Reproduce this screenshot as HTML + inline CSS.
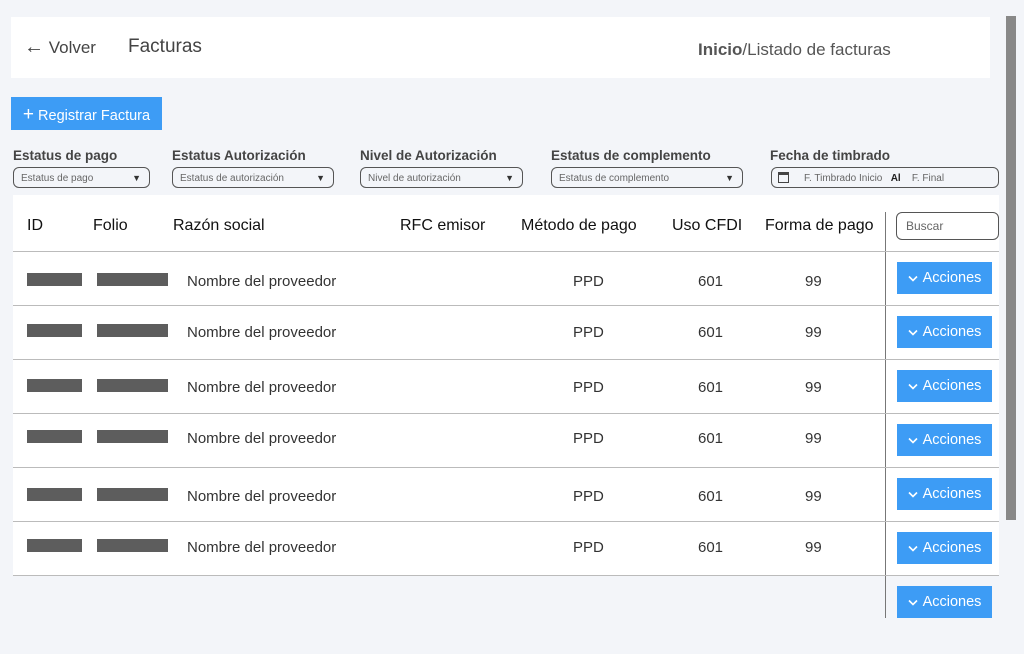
<!DOCTYPE html><html><head><style>
body{margin:0;width:1024px;height:654px;background:#f3f5f9;font-family:"Liberation Sans",sans-serif;position:relative;overflow:hidden;color:#222}
.a{position:absolute}
.hdr{left:11px;top:17px;width:979px;height:61px;background:#fff}
.lbl{font-size:13.5px;font-weight:bold;color:#444;top:148px}
.sel{top:167px;height:21px;border:1px solid #555;border-radius:6px;font-size:10px;color:#666;line-height:21px;padding-left:7px;box-sizing:border-box}
.sel i{position:absolute;right:8px;top:0;font-style:normal;font-size:9px;color:#333}
.th{top:217px;font-size:16px;color:#111}
.line{left:13px;width:986px;height:1px;background:#bbb}
.td{font-size:15px;color:#333}
.bar{height:13px;background:#5d5d5d}
.btn{left:897px;width:95px;height:32px;background:#3d9cf5;color:#fff;font-size:14.5px;line-height:32px;text-align:center}
</style></head><body>
<div class="a hdr"></div>
<div class="a" style="left:24px;top:38px;font-size:17px;color:#444"><span style="font-size:20px;line-height:17px">&#8592;</span> Volver</div>
<div class="a" style="left:128px;top:36px;font-size:19px;color:#444">Facturas</div>
<div class="a" style="left:698px;top:40px;font-size:17px;color:#555"><b style="color:#555">Inicio</b>/Listado de facturas</div>
<div class="a" style="left:11px;top:97px;width:151px;height:33px;background:#3d9cf5;color:#fff;font-size:14.5px;line-height:35px;text-align:center"><span style="font-size:19px">+</span> Registrar Factura</div>
<div class="a lbl" style="left:13px">Estatus de pago</div>
<div class="a lbl" style="left:172px">Estatus Autorización</div>
<div class="a lbl" style="left:360px">Nivel de Autorización</div>
<div class="a lbl" style="left:551px">Estatus de complemento</div>
<div class="a lbl" style="left:770px">Fecha de timbrado</div>
<div class="a sel" style="left:13px;width:137px">Estatus de pago<i>&#9660;</i></div>
<div class="a sel" style="left:172px;width:162px">Estatus de autorización<i>&#9660;</i></div>
<div class="a sel" style="left:360px;width:163px">Nivel de autorización<i>&#9660;</i></div>
<div class="a sel" style="left:551px;width:192px">Estatus de complemento<i>&#9660;</i></div>
<div class="a sel" style="left:771px;width:228px;padding-left:32px">F. Timbrado Inicio &nbsp;&nbsp;<b style="color:#222">Al</b>&nbsp;&nbsp;&nbsp; F. Final<span class="a" style="left:6px;top:4px;width:11px;height:11px;border:1px solid #444;border-top-width:3px;box-sizing:border-box"></span></div>
<div class="a" style="left:13px;top:195px;width:986px;height:380px;background:#fff"></div>
<div class="a th" style="left:27px">ID</div>
<div class="a th" style="left:93px">Folio</div>
<div class="a th" style="left:173px">Razón social</div>
<div class="a th" style="left:400px">RFC emisor</div>
<div class="a th" style="left:521px">Método de pago</div>
<div class="a th" style="left:672px">Uso CFDI</div>
<div class="a th" style="left:765px">Forma de pago</div>
<div class="a" style="left:896px;top:212px;width:103px;height:28px;border:1px solid #555;border-radius:6px;box-sizing:border-box;font-size:12px;color:#666;line-height:26px;padding-left:9px">Buscar</div>
<div class="a" style="left:885px;top:212px;width:1px;height:406px;background:#777"></div>
<div class="a line" style="top:251px"></div><div class="a line" style="top:305px"></div><div class="a line" style="top:359px"></div><div class="a line" style="top:413px"></div><div class="a line" style="top:467px"></div><div class="a line" style="top:521px"></div><div class="a line" style="top:575px"></div>
<div id="rows"></div>
<script>
var ys=[280,331,386,437,495,546],h='';
ys.forEach(function(y){h+='<div class="a bar" style="left:27px;width:55px;top:'+(y-7)+'px"></div><div class="a bar" style="left:97px;width:71px;top:'+(y-7)+'px"></div><div class="a td" style="left:187px;top:'+(y-7)+'px">Nombre del proveedor</div><div class="a td" style="left:573px;top:'+(y-7)+'px">PPD</div><div class="a td" style="left:698px;top:'+(y-7)+'px">601</div><div class="a td" style="left:805px;top:'+(y-7)+'px">99</div>';});
[262,316,370,424,478,532,586].forEach(function(t){h+='<div class="a btn" style="top:'+t+'px"><svg width="10" height="7" viewBox="0 0 10 7" style="margin-right:5px"><path d="M1 1.5L5 5.5L9 1.5" stroke="#fff" stroke-width="1.6" fill="none"/></svg>Acciones</div>';});
document.getElementById('rows').innerHTML=h;
</script>
<div class="a" style="left:1006px;top:16px;width:10px;height:504px;background:#888"></div>
</body></html>
